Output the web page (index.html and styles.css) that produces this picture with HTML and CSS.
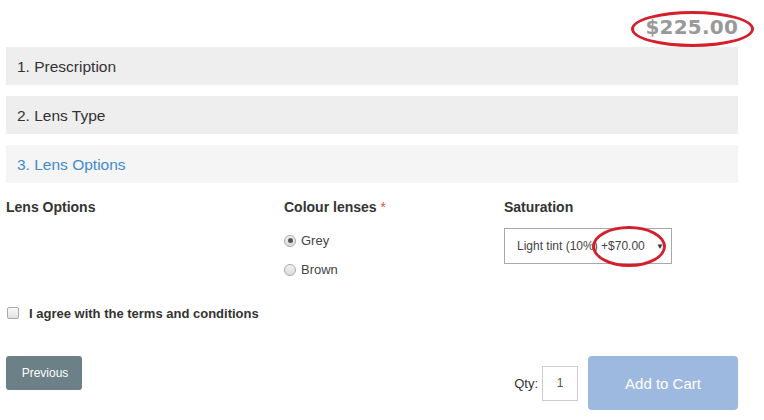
FILE: index.html
```
<!DOCTYPE html>
<html>
<head>
<meta charset="utf-8">
<link rel="stylesheet" href="styles.css">
</head>
<body>
<div class="page">
  <div class="price-row"><span class="price">$225.00</span></div>
  <div class="step">1. Prescription</div>
  <div class="step">2. Lens Type</div>
  <div class="step active">3. Lens Options</div>

  <div class="options">
    <div class="col">
      <div class="label">Lens Options</div>
    </div>
    <div class="col">
      <div class="label">Colour lenses <span class="req">*</span></div>
      <div class="radios">
        <div class="radio-row"><span class="radio checked"></span><span>Grey</span></div>
        <div class="radio-row"><span class="radio"></span><span>Brown</span></div>
      </div>
    </div>
    <div class="col">
      <div class="label">Saturation</div>
      <div class="select"><span>Light tint (10%) +$70.00</span><span class="arrow">▼</span></div>
    </div>
  </div>

  <div class="agree"><span class="checkbox"></span><span>I agree with the terms and conditions</span></div>

  <div class="actions">
    <button class="btn-prev">Previous</button>
    <div class="cart">
      <span class="qty-label">Qty:</span>
      <span class="qty">1</span>
      <button class="btn-cart">Add to Cart</button>
    </div>
  </div>

  <span class="ring ring-price"></span>
  <span class="ring ring-select"></span>
</div>
</body>
</html>
```
FILE: styles.css
```
* { box-sizing: border-box; }
html, body { margin: 0; padding: 0; background: #fff; }
body { font-family: "Liberation Sans", Arial, sans-serif; color: #333; }
.page { position: relative; width: 764px; height: 420px; padding: 0 26px 0 6px; overflow: hidden; }

.price-row { height: 47px; display: flex; justify-content: flex-end; align-items: flex-start; padding-top: 15px; }
.price { font-family: "DejaVu Sans", Verdana, sans-serif; font-weight: bold; font-size: 20px; line-height: 24px; color: #999; letter-spacing: 0.2px; }

.step { height: 38px; margin-bottom: 11px; background: #eee; padding-left: 11px; font-size: 15.5px; line-height: 39px; color: #333; }
.step.active { background: #f5f5f5; color: #428bca; margin-bottom: 0; }

.options { display: grid; grid-template-columns: 278px 220px 1fr; margin-top: 16px; height: 85px; }
.label { font-weight: bold; font-size: 14px; line-height: 16px; color: #333; }
.req { color: #d9534f; font-weight: normal; }
.radios { margin-top: 11px; }
.radio-row { height: 29px; display: flex; align-items: center; gap: 5px; font-size: 13px; color: #444; }
.radio { width: 12px; height: 12px; border-radius: 50%; border: 1px solid #a9a9a9; background: linear-gradient(#f2f2f2, #dcdcdc); display: flex; align-items: center; justify-content: center; }
.radio.checked::after { content: ""; width: 5px; height: 5px; border-radius: 50%; background: #555; }

.select { margin-top: 13px; width: 168px; height: 36px; border: 1px solid #a9a9a9; display: flex; align-items: center; justify-content: space-between; padding: 0 7px 0 12px; font-size: 12px; color: #444; }
.arrow { font-size: 8px; color: #333; }

.agree { display: flex; align-items: center; gap: 10px; margin-top: 22px; height: 14px; font-size: 13px; font-weight: bold; color: #333; padding-left: 1px; }
.checkbox { width: 12px; height: 12px; border: 1px solid #a9a9a9; border-radius: 2px; background: linear-gradient(#fafafa, #e0e0e0); }

.actions { display: flex; justify-content: space-between; align-items: flex-start; margin-top: 36px; }
.btn-prev { width: 76px; height: 34px; border: 0; border-radius: 3px; background: #6b8087; color: #fff; font-family: "Liberation Sans", Arial, sans-serif; font-size: 12px; padding: 0 0 0 2px; }
.cart { display: flex; align-items: center; }
.qty-label { font-size: 13px; color: #333; margin-right: 4px; }
.qty { width: 36px; height: 35px; border: 1px solid #ccc; display: flex; align-items: center; justify-content: center; font-size: 12px; color: #555; margin-right: 10px; }
.btn-cart { width: 150px; height: 54px; border: 0; border-radius: 4px; background: #9db9e0; color: #fff; font-family: "Liberation Sans", Arial, sans-serif; font-size: 15px; padding: 0; }

.ring { position: absolute; border: 3px solid #d4202c; border-radius: 50%; }
.ring-price { left: 631px; top: 11px; width: 123px; height: 36px; }
.ring-select { left: 592px; top: 226px; width: 74px; height: 41px; }
```
